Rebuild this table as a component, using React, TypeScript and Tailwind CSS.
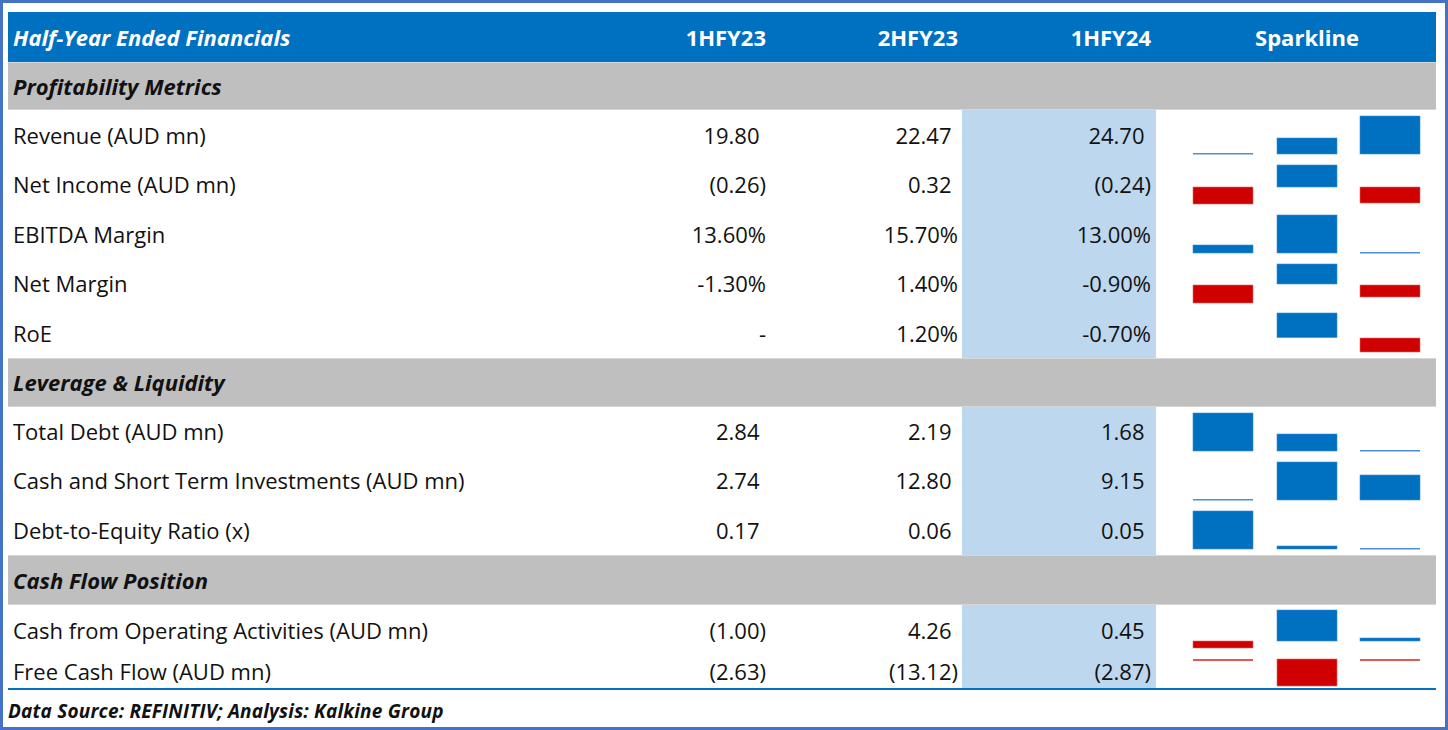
import React from 'react';

type Bar = { i: number; y: number; h: number; red?: boolean; thin?: boolean };
type Row = { label: string; v: string[]; h: number; bars: Bar[] };
type Section = { title: string; h: number; rows: Row[] };

// bar x offsets inside the sparkline cell
const barX = [37, 121, 204];

const sections: Section[] = [
  {
    title: 'Profitability Metrics',
    h: 48,
    rows: [
      { label: 'Revenue (AUD mn)', v: ['19.80', '22.47', '24.70'], h: 50, bars: [{ i: 0, y: 43, h: 1.5, thin: true }, { i: 1, y: 28, h: 16 }, { i: 2, y: 6, h: 38 }] },
      { label: 'Net Income (AUD mn)', v: ['(0.26)', '0.32', '(0.24)'], h: 49, bars: [{ i: 0, y: 27, h: 17, red: true }, { i: 1, y: 5, h: 22 }, { i: 2, y: 27, h: 16, red: true }] },
      { label: 'EBITDA Margin', v: ['13.60%', '15.70%', '13.00%'], h: 50, bars: [{ i: 0, y: 36, h: 8 }, { i: 1, y: 6, h: 38 }, { i: 2, y: 43, h: 1.5, thin: true }] },
      { label: 'Net Margin', v: ['-1.30%', '1.40%', '-0.90%'], h: 49, bars: [{ i: 0, y: 26, h: 18, red: true }, { i: 1, y: 5, h: 20 }, { i: 2, y: 26, h: 12, red: true }] },
      { label: 'RoE', v: ['-', '1.20%', '-0.70%'], h: 50, bars: [{ i: 1, y: 5, h: 24.5 }, { i: 2, y: 30, h: 14, red: true }] },
    ],
  },
  {
    title: 'Leverage & Liquidity',
    h: 49,
    rows: [
      { label: 'Total Debt (AUD mn)', v: ['2.84', '2.19', '1.68'], h: 49, bars: [{ i: 0, y: 6, h: 38 }, { i: 1, y: 27, h: 17 }, { i: 2, y: 43, h: 1.5, thin: true }] },
      { label: 'Cash and Short Term Investments (AUD mn)', v: ['2.74', '12.80', '9.15'], h: 49, bars: [{ i: 0, y: 43, h: 1.5, thin: true }, { i: 1, y: 6, h: 38 }, { i: 2, y: 19, h: 25 }] },
      { label: 'Debt-to-Equity Ratio (x)', v: ['0.17', '0.06', '0.05'], h: 50, bars: [{ i: 0, y: 6, h: 38 }, { i: 1, y: 41, h: 3 }, { i: 2, y: 43, h: 1.5, thin: true }] },
    ],
  },
  {
    title: 'Cash Flow Position',
    h: 50,
    rows: [
      { label: 'Cash from Operating Activities (AUD mn)', v: ['(1.00)', '4.26', '0.45'], h: 50, bars: [{ i: 0, y: 36, h: 7, red: true }, { i: 1, y: 5, h: 31 }, { i: 2, y: 33, h: 3 }] },
      { label: 'Free Cash Flow (AUD mn)', v: ['(2.63)', '(13.12)', '(2.87)'], h: 33, bars: [{ i: 0, y: 4, h: 2, red: true, thin: true }, { i: 1, y: 4, h: 27, red: true }, { i: 2, y: 4, h: 2, red: true, thin: true }] },
    ],
  },
];

// Excel accounting format leaves room for a closing paren on plain numbers
const Value: React.FC<{ text: string }> = ({ text }) => {
  const pad = /^[0-9]/.test(text) && !text.endsWith('%');
  return (
    <span>
      {text}
      {pad && <span className="invisible">)</span>}
    </span>
  );
};

const Sparkline: React.FC<{ bars: Bar[]; h: number }> = ({ bars, h }) => (
  <svg width={280} height={h} className="block">
    {bars.map((b, k) => (
      <rect
        key={k}
        x={barX[b.i]}
        y={b.y}
        width={60}
        height={b.h}
        fill={b.red ? (b.thin ? '#e05a5a' : '#d00000') : b.thin ? '#4a90d2' : '#0070c0'}
        stroke={b.thin ? 'none' : b.red ? '#e26a6a' : '#3d8ed3'}
        strokeWidth={0.6}
      />
    ))}
  </svg>
);

const App: React.FC = () => {
  return (
    <div
      className="w-[1448px] h-[730px] bg-white border-[3px] border-[#4472c4] pt-[9px] pl-[5px] text-[#111]"
      style={{ fontFamily: '"Open Sans", "Noto Sans", sans-serif' }}
    >
      <div className="w-[1428px]">
        {/* column header */}
        <div className="flex h-[50px] items-center bg-[#0070c0] text-white font-bold text-[22px]">
          <div className="w-[570px] pl-[5px] italic">Half-Year Ended Financials</div>
          <div className="w-[192px] text-right pr-[4px]">1HFY23</div>
          <div className="w-[192px] text-right pr-[4px]">2HFY23</div>
          <div className="w-[194px] text-right pr-[5px]">1HFY24</div>
          <div className="w-[280px] text-center pl-[22px]">Sparkline</div>
        </div>

        {sections.map((s) => (
          <div key={s.title}>
            <div
              className="flex items-center bg-[#bfbfbf] border-y border-[#d6d6d6] pl-[5px] font-bold italic text-[22px]"
              style={{ height: s.h }}
            >
              {s.title}
            </div>
            {s.rows.map((r) => (
              <div key={r.label} className="flex text-[22px]" style={{ height: r.h }}>
                <div className="w-[570px] pl-[5px] flex items-center">{r.label}</div>
                <div className="w-[192px] pr-[4px] flex items-center justify-end">
                  <Value text={r.v[0]} />
                </div>
                <div className="w-[192px] pr-[4px] flex items-center justify-end">
                  <Value text={r.v[1]} />
                </div>
                <div className="w-[194px] pr-[5px] flex items-center justify-end bg-[#bdd7ee]">
                  <Value text={r.v[2]} />
                </div>
                <div className="w-[280px]">
                  <Sparkline bars={r.bars} h={r.h} />
                </div>
              </div>
            ))}
          </div>
        ))}

        <div className="h-[2px] bg-[#0070c0]" />
        <div className="h-[42px] flex items-center font-bold italic text-[19px] tracking-[0.2px]">
          Data Source: REFINITIV; Analysis: Kalkine Group
        </div>
      </div>
    </div>
  );
};

export default App;
